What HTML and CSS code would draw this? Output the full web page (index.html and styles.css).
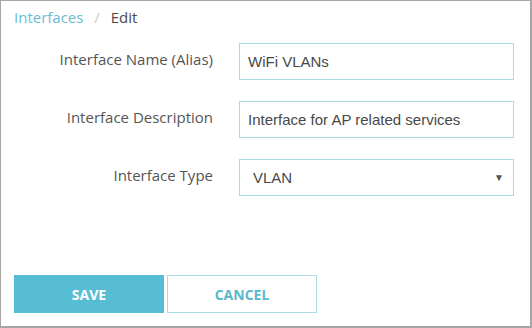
FILE: index.html
```html
<!DOCTYPE html>
<html lang="en">
<head>
    <meta charset="UTF-8">
    <title>Edit Interface</title>
    <link rel="stylesheet" href="styles.css">
</head>
<body>
    <div class="page">
        <div class="breadcrumb">
            <a href="#">Interfaces</a>
            <span class="sep">/</span>
            <span class="current">Edit</span>
        </div>

        <form class="form">
            <label for="alias">Interface Name (Alias)</label>
            <input id="alias" type="text" value="WiFi VLANs">

            <label for="desc">Interface Description</label>
            <input id="desc" type="text" value="Interface for AP related services">

            <label for="type">Interface Type</label>
            <div class="select">
                <span>VLAN</span>
                <span class="arrow">&#9660;</span>
            </div>
        </form>

        <div class="buttons">
            <button class="save">SAVE</button>
            <button class="cancel">CANCEL</button>
        </div>
    </div>
</body>
</html>
```
FILE: styles.css
```css
html, body {
    margin: 0;
    padding: 0;
}
body {
    width: 532px;
    height: 328px;
    box-sizing: border-box;
    border: 1px solid #a6a6a6;
    border-width: 1px 2px 2px 1px;
    background: #ffffff;
    font-family: "Open Sans", sans-serif;
    color: #555;
}
.page {
    padding: 0 17px 0 13px;
}
.breadcrumb {
    height: 34px;
    line-height: 32px;
    font-size: 15px;
}
.breadcrumb a {
    color: #6cbdd0;
    text-decoration: none;
}
.breadcrumb .sep {
    color: #c8c8c8;
    margin: 0 7px;
}
.breadcrumb .current {
    color: #4a4a4a;
}

/* Formulario */
.form {
    display: grid;
    grid-template-columns: 200px 275px;
    column-gap: 25px;
    row-gap: 21px;
    align-items: center;
    margin-top: 8px;
}
.form label {
    text-align: right;
    font-size: 15px;
    color: #555;
    margin-right: 1px;
    padding-bottom: 5px;
}
.form input,
.select {
    box-sizing: border-box;
    height: 37px;
    width: 275px;
    border: 1px solid #a9dbe3;
    padding: 0 8px;
    font-family: "Liberation Sans", Arial, sans-serif;
    font-size: 15px;
    color: #484848;
    outline: none;
}
.select {
    display: flex;
    align-items: center;
    justify-content: space-between;
    padding: 0 9px 0 13px;
}
.select .arrow {
    font-size: 10px;
    color: #555;
}

.buttons {
    display: flex;
    gap: 3px;
    margin-top: 79px;
}
.buttons button {
    width: 150px;
    height: 38px;
    font-family: "Open Sans", sans-serif;
    font-weight: bold;
    font-size: 14px;
    cursor: pointer;
}
.save {
    background-color: #56bdd5;
    border: none;
    color: white;
}
.cancel {
    background-color: white;
    border: 1px solid #a9dbe3;
    color: #5ab8cd;
}
```
